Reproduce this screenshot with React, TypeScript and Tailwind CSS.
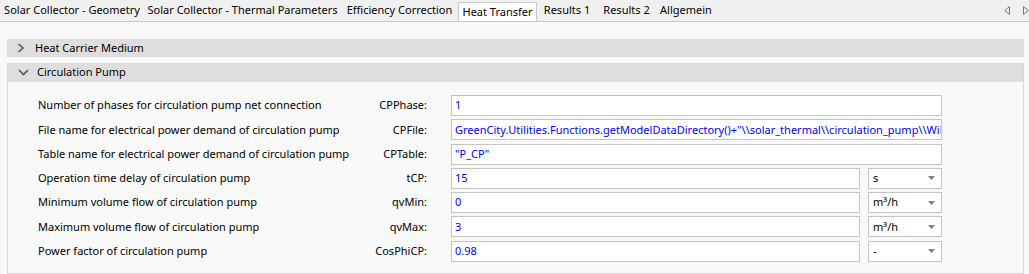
import React from 'react';

const tabs = [
  { label: 'Solar Collector - Geometry', w: 'w-[144px]' },
  { label: 'Solar Collector - Thermal Parameters', w: 'w-[197px]' },
  { label: 'Efficiency Correction', w: 'w-[117px]' },
  { label: 'Heat Transfer', w: 'w-[79px]', active: true },
  { label: 'Results 1', w: 'w-[60px]' },
  { label: 'Results 2', w: 'w-[59px]' },
  { label: 'Allgemein', w: 'w-[60px]' },
];

type Row = { label: string; name: string; value: string; unit?: string };

const rows: Row[] = [
  { label: 'Number of phases for circulation pump net connection', name: 'CPPhase:', value: '1' },
  {
    label: 'File name for electrical power demand of circulation pump',
    name: 'CPFile:',
    value: 'GreenCity.Utilities.Functions.getModelDataDirectory()+"\\\\solar_thermal\\\\circulation_pump\\\\Wilo_Stratos_PICO_15_1-6_Profile.txt"',
  },
  { label: 'Table name for electrical power demand of circulation pump', name: 'CPTable:', value: '"P_CP"' },
  { label: 'Operation time delay of circulation pump', name: 'tCP:', value: '15', unit: 's' },
  { label: 'Minimum volume flow of circulation pump', name: 'qvMin:', value: '0', unit: 'm³/h' },
  { label: 'Maximum volume flow of circulation pump', name: 'qvMax:', value: '3', unit: 'm³/h' },
  { label: 'Power factor of circulation pump', name: 'CosPhiCP:', value: '0.98', unit: '-' },
];

function ChevronRight() {
  return (
    <svg width="8" height="10" viewBox="0 0 8 10" className="text-[#555]">
      <path d="M1.5 1 L6 5 L1.5 9" fill="none" stroke="currentColor" strokeWidth="1.6" />
    </svg>
  );
}

function ChevronDown() {
  return (
    <svg width="11" height="7" viewBox="0 0 11 7" className="text-[#555]">
      <path d="M1 1 L5.5 5.5 L10 1" fill="none" stroke="currentColor" strokeWidth="1.6" />
    </svg>
  );
}

function UnitSelect({ children }: { children: React.ReactNode }) {
  return (
    <div className="w-[74px] h-[21px] bg-white border border-[#c4c4c4] flex items-center justify-between pl-[4px] pr-[6px] text-black">
      <span>{children}</span>
      <svg width="7" height="4" viewBox="0 0 7 4">
        <path d="M0 0 H7 L3.5 4 Z" fill="#808080" />
      </svg>
    </div>
  );
}

export default function App() {
  return (
    <div className="w-[1029px] h-[274px] overflow-hidden bg-[#f9f9f9] text-[11px] text-black font-['Noto_Sans',sans-serif]">
      <div className="h-[22px] bg-[#f0f0f0] border-b border-[#c9c9c9] flex items-end">
        {tabs.map((t) =>
          t.active ? (
            <div
              key={t.label}
              className={`${t.w} h-[19px] bg-white border border-b-0 border-[#c9c9c9] flex items-center justify-center whitespace-nowrap`}
            >
              {t.label}
            </div>
          ) : (
            <div key={t.label} className={`${t.w} h-[21px] flex items-center justify-center whitespace-nowrap`}>
              {t.label}
            </div>
          ),
        )}
        <div className="ml-auto flex items-center gap-[13px] h-[21px]">
          <svg width="6" height="9" viewBox="0 0 6 9">
            <path d="M5.5 0.5 V8.5 L0.8 4.5 Z" fill="none" stroke="#777" strokeWidth="1" />
          </svg>
          <svg width="6" height="9" viewBox="0 0 6 9">
            <path d="M0.5 0.5 V8.5 L5.2 4.5 Z" fill="none" stroke="#777" strokeWidth="1" />
          </svg>
        </div>
      </div>

      <div className="pt-[17px] pl-[7px] w-[1024px]">
        <div className="h-[18px] bg-[#dedede] flex items-center">
          <div className="w-[28px] flex justify-center">
            <ChevronRight />
          </div>
          <span>Heat Carrier Medium</span>
        </div>

        <div className="mt-[6px] border border-t-0 border-[#d8d8d8] h-[211px]">
          <div className="h-[19px] bg-[#dedede] flex items-center">
            <div className="w-[29px] flex justify-center pl-[1px]">
              <ChevronDown />
            </div>
            <span>Circulation Pump</span>
          </div>

          <div className="pt-[13px] flex flex-col gap-[3.3px]">
            {rows.map((r) => (
              <div key={r.name} className="flex items-center h-[21px]">
                <div className="w-[330px] pl-[30px] whitespace-nowrap">{r.label}</div>
                <div className="w-[89px] text-right whitespace-nowrap">{r.name}</div>
                <div className="ml-[24px] w-[491px] flex gap-[8px]">
                  <div
                    className={`${r.unit ? 'w-[409px]' : 'w-[491px]'} h-[21px] bg-white border border-[#c4c4c4] pl-[3px] flex items-center overflow-hidden whitespace-nowrap text-[#0000ff]`}
                  >
                    {r.value}
                  </div>
                  {r.unit && <UnitSelect>{r.unit}</UnitSelect>}
                </div>
              </div>
            ))}
          </div>
        </div>
      </div>
    </div>
  );
}
